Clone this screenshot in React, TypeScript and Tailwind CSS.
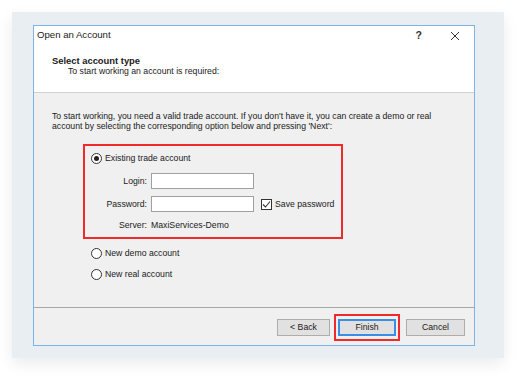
import React from "react";

const font = { fontFamily: '"Liberation Sans", Arial, sans-serif' };

function Radio({ checked, label }: { checked?: boolean; label: string }) {
  return (
    <div className="flex items-center gap-[3px] h-[12px]">
      <span className="flex h-[11px] w-[11px] items-center justify-center rounded-full border border-[#333] bg-white">
        {checked && <span className="h-[5px] w-[5px] rounded-full bg-[#222]" />}
      </span>
      <span>{label}</span>
    </div>
  );
}

function Field({ label }: { label: string }) {
  return (
    <div className="flex items-center h-[16px]">
      <span className="w-[60px] pr-[4px] text-right">{label}</span>
      <span className="h-[16px] w-[103px] border border-[#a0a0a0] bg-white" />
    </div>
  );
}

function Btn({ label, width, primary }: { label: string; width: string; primary?: boolean }) {
  return (
    <button
      className={
        "flex h-[17px] items-center justify-center bg-[#e1e1e1] " +
        width +
        (primary ? " border-2 border-[#3a8ee6]" : " border border-[#adadad]")
      }
    >
      {label}
    </button>
  );
}

export default function App() {
  return (
    <div className="h-[380px] w-[524px] bg-white p-[12px] text-[8.7px] text-[#1a1a1a]" style={font}>
      <div className="h-[346px] w-[492px] bg-[#e9eef3] pl-[21px] pt-[13px] shadow-[0_6px_14px_rgba(0,0,0,0.08)]">
        <div className="flex h-[321px] w-[442px] flex-col border border-[#7fb3e8] bg-[#f0f0f0]">
          {/* title + header */}
          <div className="bg-white">
            <div className="flex h-[19px] items-center justify-between pl-[3px] pr-[14px] text-[9.6px]">
              <span>Open an Account</span>
              <div className="flex items-center gap-[28px]">
                <span className="text-[10.5px] font-bold text-[#333]">?</span>
                <svg width="10" height="10" viewBox="0 0 10 10">
                  <path d="M1 1L9 9M9 1L1 9" stroke="#333" strokeWidth="1" />
                </svg>
              </div>
            </div>
            <div className="h-[47px] pl-[18px] pt-[10px] leading-[11px]">
              <p className="text-[9.4px] font-bold">Select account type</p>
              <p className="pl-[16px]">To start working an account is required:</p>
            </div>
          </div>
          <div className="h-px bg-[#d0d0d0]" />

          {/* body */}
          <div className="flex-1 pl-[18px] pt-[18px] leading-[10px]">
            <p>To start working, you need a valid trade account. If you don't have it, you can create a demo or real</p>
            <p>account by selecting the corresponding option below and pressing 'Next':</p>

            <div className="ml-[31px] mt-[13px] h-[95px] w-[260px] border-2 border-[#ee2a2a] pl-[6px] pt-[6px]">
              <Radio checked label="Existing trade account" />
              <div className="mt-[9px] flex flex-col gap-[7px]">
                <Field label="Login:" />
                <div className="flex items-center">
                  <Field label="Password:" />
                  <span className="ml-[7px] flex items-center gap-[3px]">
                    <span className="flex h-[11px] w-[11px] items-center justify-center border border-[#333] bg-white">
                      <svg width="9" height="9" viewBox="0 0 9 9">
                        <path d="M1 4.5L3.5 7L8 1.5" fill="none" stroke="#333" strokeWidth="1.1" />
                      </svg>
                    </span>
                    Save password
                  </span>
                </div>
                <div className="flex items-center h-[12px]">
                  <span className="w-[60px] pr-[4px] text-right">Server:</span>
                  <span>MaxiServices-Demo</span>
                </div>
              </div>
            </div>

            <div className="ml-[39px] mt-[8px] flex flex-col gap-[9px]">
              <Radio label="New demo account" />
              <Radio label="New real account" />
            </div>
          </div>

          {/* footer */}
          <div className="h-px bg-[#a8a8a8]" />
          <div className="flex h-[37px] items-start pl-[243px] pt-[11px]">
            <Btn label="< Back" width="w-[53px]" />
            <div className="-mt-[5px] ml-[4px] border-2 border-[#ee2a2a] px-[2px] py-[3px]">
              <Btn label="Finish" width="w-[58px]" primary />
            </div>
            <div className="ml-[6px]">
              <Btn label="Cancel" width="w-[59px]" />
            </div>
          </div>
        </div>
      </div>
    </div>
  );
}
